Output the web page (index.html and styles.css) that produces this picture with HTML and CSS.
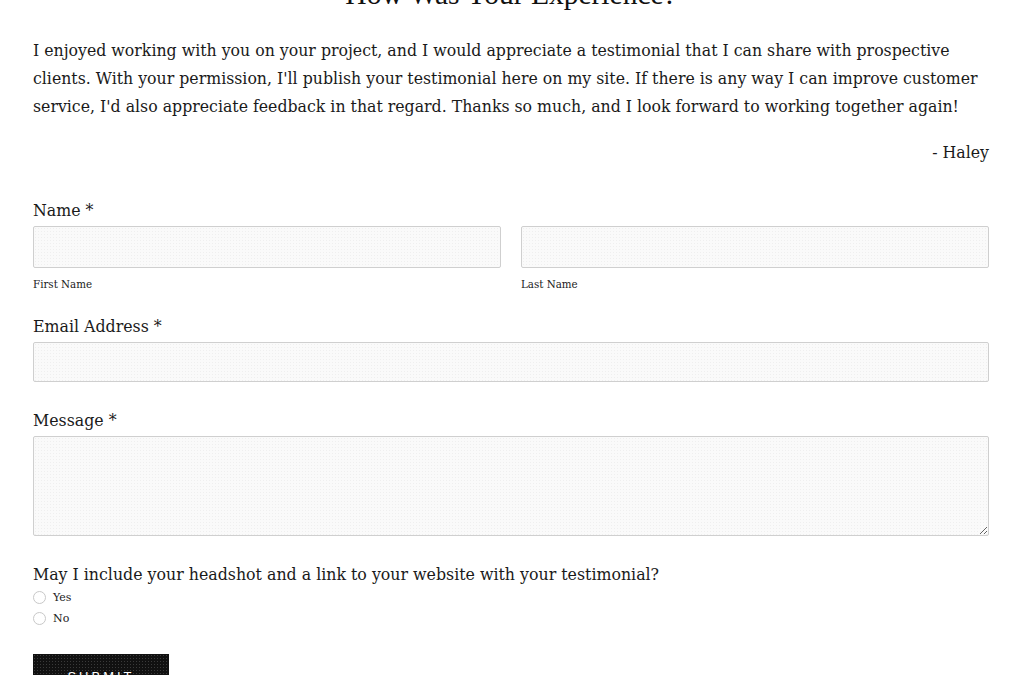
FILE: index.html
```html
<!DOCTYPE html>
<html>
<head>
<meta charset="utf-8">
<link rel="stylesheet" href="styles.css">
</head>
<body>
<main class="page">
  <h1 class="title">How Was Your Experience?</h1>
  <p class="intro">I enjoyed working with you on your project, and I would appreciate a testimonial that I can share with prospective clients. With your permission, I'll publish your testimonial here on my site. If there is any way I can improve customer service, I'd also appreciate feedback in that regard. Thanks so much, and I look forward to working together again!</p>
  <p class="sign">- Haley</p>
  <form class="form">
    <div class="field">
      <div class="label">Name *</div>
      <div class="name-row">
        <div class="name-col">
          <input class="input" type="text">
          <div class="sub">First Name</div>
        </div>
        <div class="name-col">
          <input class="input" type="text">
          <div class="sub">Last Name</div>
        </div>
      </div>
    </div>
    <div class="field field-email">
      <div class="label">Email Address *</div>
      <input class="input input-email" type="text">
    </div>
    <div class="field field-msg">
      <div class="label">Message *</div>
      <textarea class="textarea"></textarea>
    </div>
    <div class="field field-radio">
      <div class="label">May I include your headshot and a link to your website with your testimonial?</div>
      <label class="radio"><span class="dot"></span>Yes</label>
      <label class="radio"><span class="dot"></span>No</label>
    </div>
    <button class="submit" type="button">SUBMIT</button>
  </form>
</main>
</body>
</html>
```
FILE: styles.css
```css
html, body {
  margin: 0;
  padding: 0;
  background: #ffffff;
}
body {
  font-family: "DejaVu Serif", "Liberation Serif", serif;
  color: #1a1a1a;
}
.page {
  width: 956px;
  margin: 0 auto;
  display: flex;
  flex-direction: column;
}
.title {
  margin: -26px 0 0 0;
  font-family: "Liberation Serif", "Times New Roman", serif;
  font-weight: 400;
  font-size: 29.5px;
  line-height: 40px;
  text-align: center;
  color: #111;
}
.intro {
  margin: 0;
  padding-top: 23px;
  font-size: 15.75px;
  line-height: 28px;
}
.sign {
  margin: 0;
  padding-top: 18px;
  text-align: right;
  font-size: 15.75px;
  line-height: 28px;
}
.form {
  display: flex;
  flex-direction: column;
  padding-top: 32px;
}
.field {
  display: flex;
  flex-direction: column;
}
.label {
  font-size: 15.8px;
  line-height: 24px;
  margin-bottom: 3px;
}
.name-row {
  display: flex;
  gap: 20px;
}
.name-col {
  flex: 1;
  display: flex;
  flex-direction: column;
}
.input, .textarea {
  box-sizing: border-box;
  width: 100%;
  margin: 0;
  border: 1px solid #cfcfcf;
  border-radius: 2px;
  background-color: #fafafa;
  background-image: radial-gradient(#efefef 0.6px, transparent 0.8px);
  background-size: 3px 3px;
  font: inherit;
}
.input {
  height: 42px;
}
.input-email {
  height: 40px;
}
.sub {
  font-size: 10.3px;
  line-height: 14px;
  margin-top: 9px;
  margin-bottom: 24px;
  color: #222;
}
.field-email {
  margin-bottom: 27px;
}
.textarea {
  height: 100px;
  resize: vertical;
  display: block;
}
.field-msg {
  margin-bottom: 27px;
}
.field-radio .label {
  margin-bottom: 0;
}
.radio {
  display: flex;
  align-items: center;
  font-size: 11px;
  line-height: 21px;
  color: #222;
}
.dot {
  width: 13px;
  height: 13px;
  border: 1px solid #c8c8c8;
  border-radius: 50%;
  background: #fff;
  margin-right: 7px;
  box-sizing: border-box;
}
.submit {
  align-self: flex-start;
  margin-top: 25px;
  width: 136px;
  height: 44px;
  border: none;
  background-color: #111;
  background-image: radial-gradient(#3a3a3a 0.6px, transparent 0.8px);
  background-size: 3px 3px;
  color: #fff;
  font-family: "Liberation Sans", Arial, sans-serif;
  font-size: 13px;
  letter-spacing: 3px;
  padding: 0;
}
```
